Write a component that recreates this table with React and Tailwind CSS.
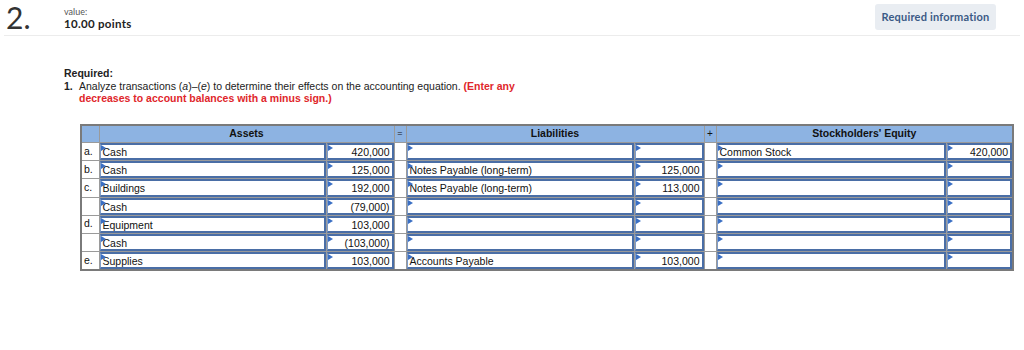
const rows = [
  { l: 'a.', an: 'Cash', aa: '420,000', ln: '', la: '', en: 'Common Stock', ea: '420,000' },
  { l: 'b.', an: 'Cash', aa: '125,000', ln: 'Notes Payable (long-term)', la: '125,000', en: '', ea: '' },
  { l: 'c.', an: 'Buildings', aa: '192,000', ln: 'Notes Payable (long-term)', la: '113,000', en: '', ea: '' },
  { l: '', an: 'Cash', aa: '(79,000)', ln: '', la: '', en: '', ea: '' },
  { l: 'd.', an: 'Equipment', aa: '103,000', ln: '', la: '', en: '', ea: '' },
  { l: '', an: 'Cash', aa: '(103,000)', ln: '', la: '', en: '', ea: '' },
  { l: 'e.', an: 'Supplies', aa: '103,000', ln: 'Accounts Payable', la: '103,000', en: '', ea: '' },
]

function Cell({ value, right }) {
  return (
    <td className="p-0 border border-[#9a9a9a]">
      <div
        className={
          'relative h-[17.2px] border-y-2 border-l border-r-2 border-y-[#4a6ea6] border-l-[#7f9cc8] border-r-[#4a6ea6] bg-white px-[2px] leading-[14px] ' +
          (right ? 'text-right' : 'text-left')
        }
      >
        <span className="absolute left-0 top-0 w-0 h-0 border-t-[3px] border-b-[3px] border-l-[5px] border-t-transparent border-b-transparent border-l-[#3a6fc4]" />
        {value}
      </div>
    </td>
  )
}

export default function App() {
  return (
    <div className="w-[1024px] h-[350px] bg-white relative" style={{ fontFamily: '"Liberation Sans", Arial, sans-serif' }}>
      {/* Header */}
      <div className="flex items-start mx-[4px] border-b border-[#ececec] h-[36px]">
        <div className="w-[60px] pl-[2px] pt-[1px] text-[30px] leading-[32px] text-[#333]" style={{ fontFamily: 'Lato, sans-serif' }}>
          2.
        </div>
        <div className="pt-[7px]" style={{ fontFamily: 'Lato, sans-serif' }}>
          <div className="text-[9px] leading-[10px] text-[#555]">value:</div>
          <div className="text-[11.5px] leading-[14px] font-bold text-[#222] tracking-[0.3px]">10.00 points</div>
        </div>
        <div className="ml-auto mr-[24px] mt-[4px] w-[121px] h-[26px] rounded-[3px] bg-[#e9edf2] flex items-center justify-center text-[11px] font-bold text-[#3b5a86] tracking-[0.2px]" style={{ fontFamily: 'Lato, sans-serif' }}>
          Required information
        </div>
      </div>

      {/* Instructions */}
      <div className="ml-[64px] mt-[31px] text-[10.5px] leading-[12.5px] text-[#222]">
        <div className="font-bold">Required:</div>
        <div className="flex">
          <span className="w-[15px] font-bold">1.</span>
          <div className="w-[440px]">
            Analyze transactions (<i>a</i>)–(<i>e</i>) to determine their effects on the accounting equation.{' '}
            <span className="font-bold text-[#e0262b]">(Enter any decreases to account balances with a minus sign.)</span>
          </div>
        </div>
      </div>

      {/* Table */}
      <table className="ml-[80px] mt-[19px] border-collapse border-2 border-[#7a7a7a] table-fixed text-[10.5px] text-[#111]">
        <colgroup>
          <col className="w-[18px]" />
          <col className="w-[227px]" />
          <col className="w-[68px]" />
          <col className="w-[12px]" />
          <col className="w-[228px]" />
          <col className="w-[70px]" />
          <col className="w-[12px]" />
          <col className="w-[230px]" />
          <col className="w-[67px]" />
        </colgroup>
        <thead>
          <tr className="h-[18px] bg-[#8db3e2] font-bold">
            <th className="border border-[#9a9a9a]"></th>
            <th colSpan={2} className="border border-[#9a9a9a]">Assets</th>
            <th className="border border-[#9a9a9a] font-normal text-[9px]">=</th>
            <th colSpan={2} className="border border-[#9a9a9a]">Liabilities</th>
            <th className="border border-[#9a9a9a] font-normal text-[10px]">+</th>
            <th colSpan={2} className="border border-[#9a9a9a]">Stockholders' Equity</th>
          </tr>
        </thead>
        <tbody>
          {rows.map((r, i) => (
            <tr key={i}>
              <td className="p-0 pl-[2px] border border-[#9a9a9a]">{r.l}</td>
              <Cell value={r.an} />
              <Cell value={r.aa} right />
              <td className="p-0 border border-[#9a9a9a]"></td>
              <Cell value={r.ln} />
              <Cell value={r.la} right />
              <td className="p-0 border border-[#9a9a9a]"></td>
              <Cell value={r.en} />
              <Cell value={r.ea} right />
            </tr>
          ))}
        </tbody>
      </table>
    </div>
  )
}
